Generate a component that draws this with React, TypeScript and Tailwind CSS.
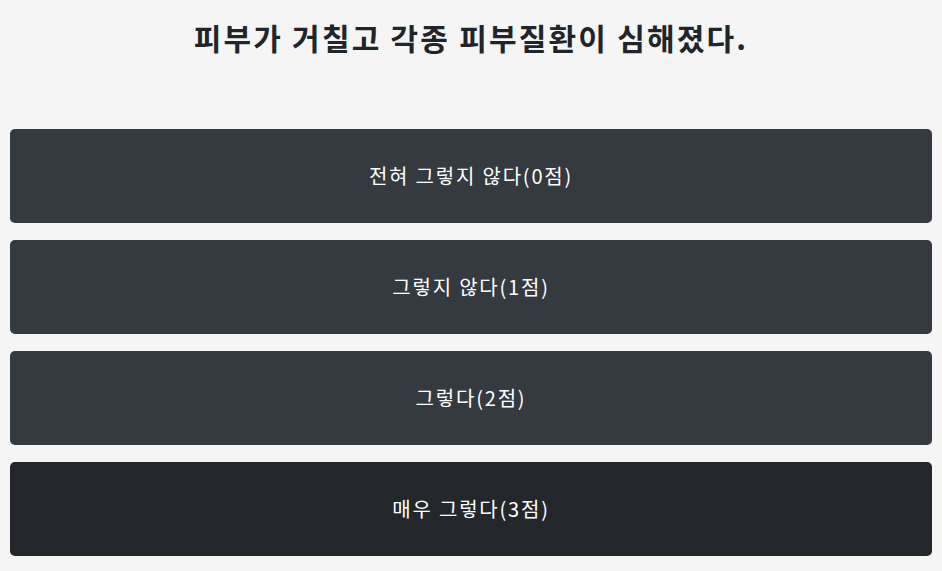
const options = ['전혀 그렇지 않다(0점)', '그렇지 않다(1점)', '그렇다(2점)', '매우 그렇다(3점)'];

export default function App() {
  const selected = 3;

  return (
    <div
      className="min-h-screen bg-[#f5f5f5] px-[10px] pt-[14px]"
      style={{ fontFamily: '"Noto Sans CJK KR", "Noto Sans", sans-serif' }}
    >
      <h1 className="text-center text-[30px] font-bold leading-[46px] tracking-[2.2px] text-[#212529]">
        피부가 거칠고 각종 피부질환이 심해졌다.
      </h1>

      <div className="mt-[69px] flex flex-col gap-[17px]">
        {options.map((label, i) => (
          <button
            key={label}
            className={
              i === selected
                ? 'h-[94px] w-full rounded-[5px] bg-[#23272b] text-[20px] tracking-[1.8px] text-white'
                : 'h-[94px] w-full rounded-[5px] bg-[#343a40] text-[20px] tracking-[1.8px] text-white'
            }
          >
            {label}
          </button>
        ))}
      </div>
    </div>
  );
}
